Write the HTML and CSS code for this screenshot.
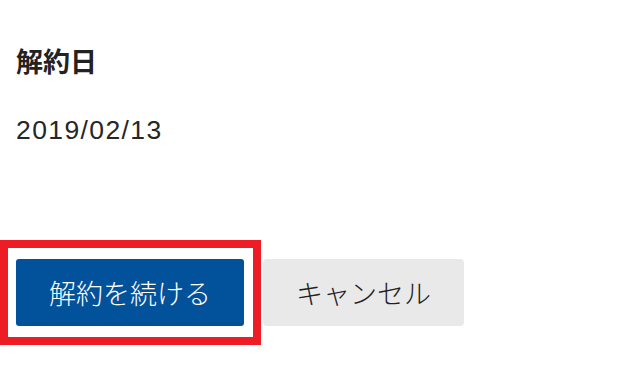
FILE: index.html
```html
<!DOCTYPE html>
<html lang="ja">
<head>
<meta charset="utf-8">
<title>解約日</title>
<link rel="stylesheet" href="styles.css">
</head>
<body>
<main class="page">
  <section class="field">
    <h2 class="field-label">解約日</h2>
    <p class="field-value">2019/02/13</p>
  </section>
  <div class="actions">
    <div class="highlight">
      <button class="btn btn-primary" type="button">解約を続ける</button>
    </div>
    <button class="btn btn-secondary" type="button">キャンセル</button>
  </div>
</main>
</body>
</html>
```

FILE: styles.css
```css
html, body {
  margin: 0;
  padding: 0;
  background: #ffffff;
}

body {
  font-family: "Liberation Sans", "Noto Sans CJK JP", sans-serif;
  color: #222222;
}

.page {
  padding-top: 40px;
}

.field {
  padding: 0 16px;
}

.field-label {
  margin: 0;
  font-size: 27px;
  line-height: 46px;
  font-weight: 700;
}

.field-value {
  margin: 24px 0 0 0;
  font-size: 26.5px;
  line-height: 40px;
  letter-spacing: 1.4px;
  color: #262626;
}

.actions {
  display: flex;
  align-items: flex-start;
  gap: 2px;
  margin-top: 90px;
}

.highlight {
  display: flex;
  border: 8px solid #ee1c25;
  padding: 11px 9px 11px 8px;
}

.btn {
  font-family: "Noto Sans CJK JP", sans-serif;
  font-size: 27px;
  font-weight: 300;
  height: 67px;
  border: none;
  padding: 0;
  cursor: pointer;
}

.btn-primary {
  width: 228px;
  background: #02529b;
  color: #ffffff;
  border-radius: 3px;
}

.btn-secondary {
  margin-top: 19px;
  width: 201px;
  background: #e9e9e9;
  color: #222222;
  border-radius: 4px;
}
```
